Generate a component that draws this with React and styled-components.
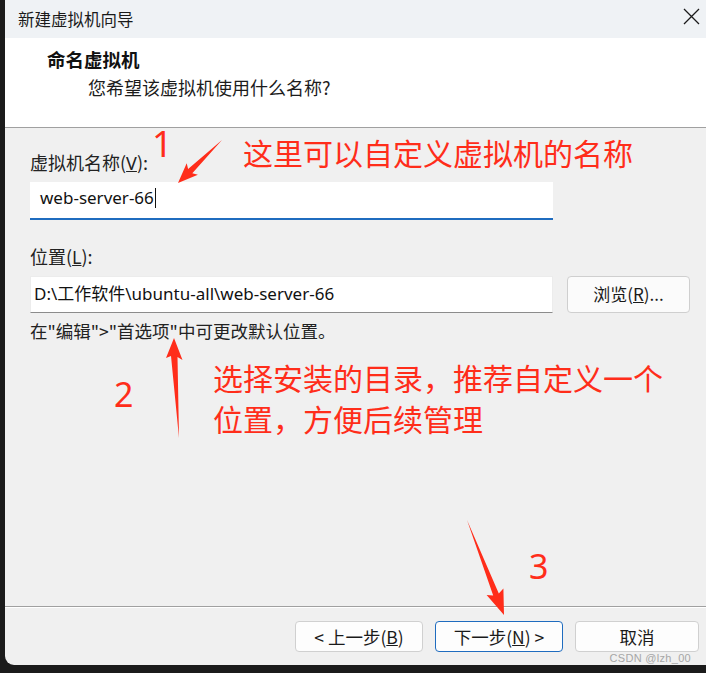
import React from "react";
import styled, { createGlobalStyle } from "styled-components";

const GlobalStyle = createGlobalStyle`
  html, body {
    margin: 0;
    padding: 0;
    background: #1b1b1b;
  }
  * { box-sizing: border-box; }
`;

const SANS = `"Noto Sans", "Noto Sans CJK SC", sans-serif`;
const CJK = `"Noto Sans CJK SC", "Noto Sans", sans-serif`;

function App() {
  return (
    <Frame>
      <GlobalStyle />
      <Window>
        <TitleBar>
          <TitleText>新建虚拟机向导</TitleText>
          <CloseButton>
            <svg width="17" height="17" viewBox="0 0 17 17">
              <path d="M1 1 L16 16 M16 1 L1 16" stroke="#1a1a1a" strokeWidth="1.3" fill="none" />
            </svg>
          </CloseButton>
        </TitleBar>
        <Header>
          <HeaderTitle>命名虚拟机</HeaderTitle>
          <HeaderSub>您希望该虚拟机使用什么名称?</HeaderSub>
        </Header>
        <Body>
          <Label>
            虚拟机名称(<u>V</u>):
          </Label>
          <NameInput>
            web-server-66
            <Caret />
          </NameInput>
          <Label $gap={25}>
            位置(<u>L</u>):
          </Label>
          <PathRow>
            <PathInput>D:\工作软件\ubuntu-all\web-server-66</PathInput>
            <BrowseButton>
              浏览(<u>R</u>)...
            </BrowseButton>
          </PathRow>
          <Hint>在"编辑"&gt;"首选项"中可更改默认位置。</Hint>
        </Body>
        <Footer>
          <Button>
            &lt; 上一步(<u>B</u>)
          </Button>
          <Button $primary>
            下一步(<u>N</u>) &gt;
          </Button>
          <Button $width={124}>取消</Button>
          <Watermark>CSDN @lzh_00</Watermark>
        </Footer>
      </Window>

      <Arrows width="706" height="673" viewBox="0 0 706 673">
        <polygon
          points="222,140 192.3,173.2 197.9,174.7 178,183 186.7,163.3 188.1,169"
          fill="#ff2d1a"
        />
        <polygon
          points="179,438 177.5,357 182.5,360 174,338 166,358 171,356"
          fill="#ff2d1a"
        />
        <polygon
          points="467,520 498.8,593.4 503.4,588.4 504,615 486.6,595 493.2,595.6"
          fill="#ff2d1a"
        />
      </Arrows>

      <Note $x={152} $y={122} $size={36}>1</Note>
      <Note $x={243} $y={133}>这里可以自定义虚拟机的名称</Note>
      <Note $x={114} $y={374} $size={34}>2</Note>
      <Note $x={213} $y={358}>选择安装的目录，推荐自定义一个</Note>
      <Note $x={213} $y={399}>位置，方便后续管理</Note>
      <Note $x={529} $y={546} $size={34}>3</Note>
    </Frame>
  );
}

const Frame = styled.div`
  position: relative;
  width: 706px;
  height: 673px;
  padding-left: 5px;
  background: #1b1b1b;
  overflow: hidden;
`;

const Window = styled.div`
  width: 701px;
  height: 665px;
  display: flex;
  flex-direction: column;
  background: #f0f0f0;
  border-bottom-left-radius: 9px;
  overflow: hidden;
  font-family: ${CJK};
  color: #1c1c1c;
`;

const TitleBar = styled.div`
  height: 38px;
  flex: none;
  display: flex;
  align-items: center;
  justify-content: space-between;
  padding: 0 6px 0 13px;
  background: #eff2f5;
`;

const TitleText = styled.span`
  font-size: 16.5px;
  color: #1a1a1a;
`;

const CloseButton = styled.div`
  width: 17px;
  height: 17px;
  display: flex;
  margin-top: -6px;
`;

const Header = styled.div`
  height: 90px;
  flex: none;
  padding: 9px 0 0 42px;
  background: #ffffff;
  border-bottom: 1px solid #a0a0a0;
`;

const HeaderTitle = styled.div`
  font-size: 18.5px;
  font-weight: 700;
  line-height: 24px;
  color: #111;
`;

const HeaderSub = styled.div`
  margin: 4px 0 0 41px;
  font-size: 18px;
  line-height: 24px;
  color: #1c1c1c;
`;

const Body = styled.div`
  flex: 1;
  padding: 23px 0 0 25px;
`;

const Label = styled.div`
  margin-top: ${(p) => (p.$gap ? `${p.$gap}px` : "0")};
  font-size: 18px;
  line-height: 22px;
  color: #222;
  u {
    font-family: ${SANS};
  }
`;

const NameInput = styled.div`
  margin-top: 8px;
  width: 523px;
  height: 38px;
  display: flex;
  align-items: center;
  padding: 0 0 5px 10px;
  background: #ffffff;
  border-bottom: 2px solid #1f6cbf;
  font-family: ${SANS};
  font-size: 17px;
  color: #111;
`;

const Caret = styled.span`
  display: inline-block;
  width: 1px;
  height: 20px;
  margin-left: 1px;
  background: #111;
`;

const PathRow = styled.div`
  margin-top: 8px;
  display: flex;
  gap: 14px;
`;

const PathInput = styled.div`
  width: 523px;
  height: 37px;
  display: flex;
  align-items: center;
  padding: 0 0 4px 3px;
  background: #ffffff;
  border: 1px solid #ececec;
  border-bottom: 1px solid #8c8c8c;
  font-family: ${SANS};
  font-size: 17px;
  color: #111;
`;

const BrowseButton = styled.div`
  width: 123px;
  height: 37px;
  display: flex;
  align-items: center;
  justify-content: center;
  padding-bottom: 2px;
  background: #fbfbfb;
  border: 1px solid #cfcfcf;
  border-radius: 4px;
  font-size: 17px;
  color: #1a1a1a;
`;

const Hint = styled.div`
  margin-top: 7px;
  font-size: 17.5px;
  line-height: 22px;
  color: #222;
`;

const Footer = styled.div`
  position: relative;
  height: 59px;
  flex: none;
  display: flex;
  justify-content: flex-end;
  align-items: flex-start;
  gap: 12px;
  padding: 14px 7px 0 0;
  border-top: 1px solid #a0a0a0;
  box-shadow: inset 0 1px 0 #ffffff;
`;

const Button = styled.div`
  width: ${(p) => p.$width || 128}px;
  height: 31px;
  display: flex;
  align-items: center;
  justify-content: center;
  background: #fdfdfd;
  border: 1px solid ${(p) => (p.$primary ? "#1f6cbf" : "#d0d0d0")};
  border-radius: 4px;
  font-size: 17.5px;
  color: #1a1a1a;
`;

const Watermark = styled.span`
  position: absolute;
  right: 15px;
  bottom: 1px;
  font-family: "Liberation Sans", sans-serif;
  font-size: 11px;
  color: #a6a6a6;
  letter-spacing: 0.3px;
`;

const Arrows = styled.svg`
  position: absolute;
  top: 0;
  left: 0;
  pointer-events: none;
`;

const Note = styled.div`
  position: absolute;
  left: ${(p) => p.$x}px;
  top: ${(p) => p.$y}px;
  font-family: ${(p) => (p.$size ? SANS : CJK)};
  font-size: ${(p) => p.$size || 30}px;
  line-height: ${(p) => (p.$size ? 1.2 : "39px")};
  color: #ff2d1a;
  white-space: nowrap;
  pointer-events: none;
`;

export default App;
